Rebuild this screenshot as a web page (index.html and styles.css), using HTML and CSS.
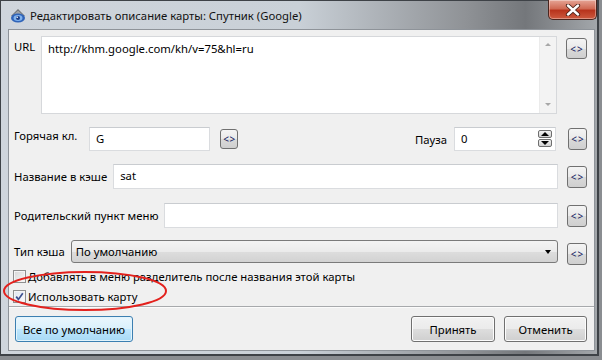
FILE: index.html
```html
<!DOCTYPE html>
<html lang="ru">
<head>
  <meta charset="UTF-8" />
  <title>Редактировать описание карты</title>
  <link rel="stylesheet" href="styles.css">
</head>
<body>

<div class="window">
  <div class="titlebar">
    <svg class="app-icon" width="16" height="15" viewBox="0 0 16 15">
      <path d="M1 8 L8 1 L15 8 Z" fill="#6d7074"/>
      <path d="M3 7 L8 2.5 L13 7 Z" fill="#9ea2a6"/>
      <ellipse cx="8" cy="10" rx="7" ry="4.5" fill="#2f63b8"/>
      <ellipse cx="8" cy="10" rx="4.5" ry="3" fill="#7fb2ee"/>
      <circle cx="8" cy="10" r="2" fill="#1d3f86"/>
      <circle cx="7.2" cy="9.3" r="0.8" fill="#fff"/>
    </svg>
    <span class="title">Редактировать описание карты: Спутник (Google)</span>
    <div class="close-btn">
      <svg width="16" height="12" viewBox="0 0 16 12">
        <path d="M3 1.5 L13 10.5 M13 1.5 L3 10.5" stroke="#4a2219" stroke-width="4.2" stroke-linecap="round"/>
        <path d="M3 1.5 L13 10.5 M13 1.5 L3 10.5" stroke="#fff" stroke-width="2.4" stroke-linecap="round"/>
      </svg>
    </div>
  </div>

  <div class="client">
    <div class="row url-row">
      <span class="lbl url-lbl">URL</span>
      <div class="edit memo">
        <span class="memo-text">http://khm.google.com/kh/v=75&amp;hl=ru</span>
        <div class="vscroll">
          <span class="sarrow up"></span>
          <span class="sarrow down"></span>
        </div>
      </div>
      <div class="ins-btn top">&lt;&gt;</div>
    </div>

    <div class="row hotkey-row">
      <span class="lbl hotkey-lbl">Горячая кл.</span>
      <div class="edit hotkey">G</div>
      <div class="ins-btn small">&lt;&gt;</div>
      <span class="spacer"></span>
      <span class="lbl pause-lbl">Пауза</span>
      <div class="edit spin">
        <span>0</span>
        <div class="spin-btns">
          <span class="spin-btn"><span class="tri up"></span></span>
          <span class="spin-btn"><span class="tri down"></span></span>
        </div>
      </div>
      <div class="ins-btn far">&lt;&gt;</div>
    </div>

    <div class="row name-row">
      <span class="lbl">Название в кэше</span>
      <div class="edit wide">sat</div>
      <div class="ins-btn">&lt;&gt;</div>
    </div>

    <div class="row parent-row">
      <span class="lbl">Родительский пункт меню</span>
      <div class="edit wide"></div>
      <div class="ins-btn">&lt;&gt;</div>
    </div>

    <div class="row type-row">
      <span class="lbl">Тип кэша</span>
      <div class="combo">
        <span>По умолчанию</span>
        <span class="tri down"></span>
      </div>
      <div class="ins-btn">&lt;&gt;</div>
    </div>

    <div class="check-row first">
      <span class="check"></span>
      <span>Добавлять в меню разделитель после названия этой карты</span>
    </div>
    <div class="check-row second">
      <span class="check checked">
        <svg width="9" height="9" viewBox="0 0 9 9"><path d="M1.2 4.6 L3.4 7.4 L7.8 1.2" fill="none" stroke="#3a4f8f" stroke-width="1.7"/></svg>
      </span>
      <span>Использовать карту</span>
    </div>

    <div class="separator"></div>

    <div class="buttons">
      <div class="btn default-btn">Все по умолчанию</div>
      <span class="spacer"></span>
      <div class="btn ok-btn">Принять</div>
      <div class="btn cancel-btn">Отменить</div>
    </div>

    <!-- red annotation round the checkbox -->
    <svg class="mark" width="180" height="48" viewBox="0 0 180 48">
      <ellipse cx="83" cy="23" rx="81" ry="19" fill="none" stroke="#e3211d" stroke-width="2"/>
    </svg>
  </div>
</div>

</body>
</html>
```

FILE: styles.css
```css
* { box-sizing: border-box; }
body {
  margin: 0;
  background: #8a8d91;
  font-family: "Noto Sans", "DejaVu Sans", sans-serif;
  font-size: 11.3px;
  color: #000;
}
.window {
  width: 599px;
  height: 356px;
  border: solid #3e4247;
  border-width: 1px 2px 2px 1px;
  background: linear-gradient(to right, #cfd5dc 0%, #c9d0d7 50%, #8f9296 78%, #74777b 88%, #a3a7ab 100%);
  display: flex;
  flex-direction: column;
  padding: 0 2px 3px 7px;
}
.titlebar {
  height: 28px;
  display: flex;
  align-items: flex-start;
  flex-shrink: 0;
}
.app-icon { margin: 7px 0 0 2px; }
.title {
  margin: 7px 0 0 4px;
  font-size: 11.3px;
  color: #111;
}
.close-btn {
  margin: -1px -2px 0 auto;
  width: 49px;
  height: 20px;
  border: 1px solid #4b251e;
  border-top: none;
  border-radius: 0 0 5px 5px;
  background: linear-gradient(#e6a596 0%, #d06a54 45%, #b8341d 55%, #cd5a3f 100%);
  display: flex;
  align-items: center;
  justify-content: center;
  box-shadow: inset 0 0 0 1px rgba(255,255,255,0.35);
}

.client {
  position: relative;
  flex: 1;
  background: #f0f0f0;
  border: 1px solid #8e9399;
  padding: 6px 7px 0 5px;
  display: flex;
  flex-direction: column;
}
.row {
  display: flex;
  align-items: center;
}
.lbl { margin-right: 6px; white-space: nowrap; }
.edit {
  height: 24px;
  background: #fff;
  border: 1px solid #dadcdf;
  border-top-color: #c9ccd0;
  padding: 3px 6px;
}
.wide { flex: 1; height: 25px; }

.url-row { align-items: flex-start; height: 78px; }
.url-lbl { width: 21px; margin: 3px 6px 0 0; }
.memo {
  flex: 1;
  height: 78px;
  position: relative;
  padding: 4px 6px;
  border-color: #d6d8db;
}
.vscroll {
  position: absolute;
  top: 0; right: 0; bottom: 0;
  width: 17px;
  background: #f3f3f3;
  border-left: 1px solid #ebebeb;
  display: flex;
  flex-direction: column;
  justify-content: space-between;
  align-items: center;
  padding: 6px 0 7px;
}
.sarrow { width: 0; height: 0; border: 3.5px solid transparent; }
.sarrow.up { border-bottom-color: #a7a7a7; border-top-width: 0; }
.sarrow.down { border-top-color: #a7a7a7; border-bottom-width: 0; }

.ins-btn {
  width: 20px;
  height: 22px;
  margin-left: 9px;
  border: 1px solid #707070;
  border-radius: 3px;
  background: linear-gradient(#f4f4f4 0%, #e9e9e9 50%, #d9d9d9 52%, #cfcfcf 100%);
  font-size: 10px;
  line-height: 1;
  letter-spacing: 1px;
  padding-left: 1px;
  color: #14205e;
  display: flex;
  align-items: center;
  justify-content: center;
}
.ins-btn.top { margin-top: 2px; height: 21px; width: 21px; }
.ins-btn.small { width: 18px; height: 20px; margin-left: 10px; letter-spacing: 0.5px; }
.ins-btn.far { margin-left: 12px; width: 19px; }

.hotkey-row { margin-top: 13px; height: 24px; }
.hotkey-lbl { width: 69px; align-self: flex-start; margin-top: 1px; }
.hotkey { width: 121px; }
.spacer { flex: 1; }
.pause-lbl { margin-right: 7px; }
.spin {
  width: 102px;
  display: flex;
  justify-content: space-between;
  padding-right: 3px;
}
.spin-btns {
  display: flex;
  flex-direction: column;
  gap: 1px;
  margin-top: -1px;
}
.spin-btn {
  width: 14px;
  height: 8px;
  border: 1px solid #6e6e6e;
  border-radius: 2px;
  background: linear-gradient(#f2f2f2, #d0d0d0);
  display: flex;
  align-items: center;
  justify-content: center;
}
.tri { width: 0; height: 0; border: 4px solid transparent; }
.tri.up { border-bottom-color: #000; border-top-width: 0; }
.tri.down { border-top-color: #000; border-bottom-width: 0; }

.name-row { margin-top: 13px; height: 25px; }
.parent-row { margin-top: 14px; height: 25px; }
.type-row { margin-top: 12px; height: 23px; }
.type-row .ins-btn { margin-top: 4px; }
.combo {
  flex: 1;
  height: 23px;
  border: 1px solid #7a7a7a;
  border-radius: 3px;
  background: linear-gradient(#f3f3f3 0%, #ebebeb 50%, #dddddd 52%, #d2d2d2 100%);
  display: flex;
  align-items: center;
  justify-content: space-between;
  padding: 0 6px 0 4px;
}
.combo .tri { border-width: 4px 3.5px 0; }

.check-row {
  display: flex;
  align-items: center;
  height: 16px;
  margin-left: -1px;
}
.check-row.first { margin-top: 5px; }
.check-row.second { margin-top: 4px; }
.check {
  width: 13px;
  height: 13px;
  margin-right: 2px;
  border: 1px solid #8e8f8f;
  background: linear-gradient(135deg, #d7d7d7, #f8f8f8);
  box-shadow: inset 0 0 0 1px #f4f4f4;
  display: flex;
  align-items: center;
  justify-content: center;
}
.check.checked { background: linear-gradient(135deg, #dfe4ee, #fafbfd); }

.separator {
  margin: 2px -7px 0 -5px;
  height: 1px;
  background: #a7a9ac;
  box-shadow: 0 1px 0 #fbfbfb;
}
.buttons {
  display: flex;
  gap: 9px;
  margin-top: 9px;
  padding-left: 1px;
}
.buttons .spacer { margin-left: -9px; }
.btn {
  height: 26px;
  border: 1px solid #707070;
  border-radius: 3px;
  background: linear-gradient(#f2f2f2 0%, #ebebeb 50%, #dddddd 52%, #cfcfcf 100%);
  box-shadow: inset 0 0 0 1px #fcfcfc;
  display: flex;
  align-items: center;
  justify-content: center;
}
.default-btn {
  width: 118px;
  border-color: #3c7fb1;
  background: linear-gradient(#eaf6fd 0%, #d9f0fc 50%, #bee6fd 52%, #a7d9f5 100%);
  box-shadow: inset 0 0 0 1px #e3f4fc;
}
.ok-btn { width: 84px; }
.cancel-btn { width: 83px; }

.mark {
  position: absolute;
  left: -7px;
  top: 238px;
}
```
